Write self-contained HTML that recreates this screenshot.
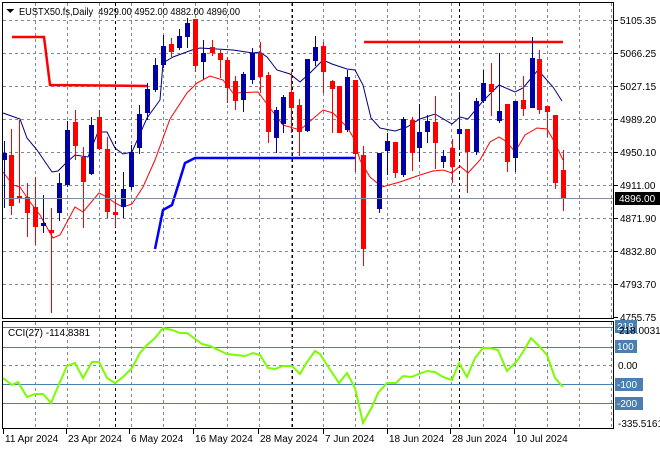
<!DOCTYPE html>
<html><head><meta charset="utf-8"><style>
html,body{margin:0;padding:0;background:#fff;width:660px;height:450px;overflow:hidden}
svg text{font-family:"Liberation Sans",sans-serif;font-size:10px;fill:#000}
</style></head><body>
<svg id="s" width="660" height="450" xmlns="http://www.w3.org/2000/svg" shape-rendering="crispEdges">
<rect width="660" height="450" fill="#fff"/>
<g id="grid" stroke="#7f8a99" stroke-dasharray="3,3" stroke-width="1"></g>
<g id="ind"></g>
<g id="cand"></g>
<line x1="2" y1="198.5" x2="614" y2="198.5" stroke="#8090a0"/>
<rect x="2.5" y="2.5" width="611" height="316" fill="none" stroke="#000"/>
<rect x="2.5" y="321.5" width="611" height="107" fill="none" stroke="#000"/>
<path d="M6 9 L14 9 L10 13 Z" fill="#000"/>
<text x="19" y="15" xml:space="preserve" textLength="221" lengthAdjust="spacingAndGlyphs">EUSTX50.fs,Daily  4929.00 4952.00 4882.00 4896.00</text>
<text x="8" y="336">CCI(27) -114.8381</text>
<g id="lab"></g>
</svg>
<script>
const NS="http://www.w3.org/2000/svg";
function el(p,t,a,txt){const e=document.createElementNS(NS,t);for(const k in a)e.setAttribute(k,a[k]);if(txt)e.textContent=txt;document.getElementById(p).appendChild(e);return e;}
[20,53,86,119,152,185,218,251,284].forEach(y=>el('grid','line',{x1:3,x2:613,y1:y+.5,y2:y+.5}));
[365].forEach(y=>el('grid','line',{x1:3,x2:613,y1:y+.5,y2:y+.5}));
for(let x=35;x<614;x+=32){if(x==115)continue;el('grid','line',{x1:x+.5,x2:x+.5,y1:3,y2:318});el('grid','line',{x1:x+.5,x2:x+.5,y1:322,y2:428});}
[115,292,459].forEach(x=>{el('grid','line',{x1:x+.5,x2:x+.5,y1:3,y2:318,stroke:'#000'});el('grid','line',{x1:x+.5,x2:x+.5,y1:322,y2:428,stroke:'#000'});});
[327,347,384,403].forEach(y=>el('ind','line',{x1:3,x2:613,y1:y+.5,y2:y+.5,stroke:'#4a7fb0'}));
function pl(pts,c,w){el('ind','polyline',{points:pts,fill:'none',stroke:c,'stroke-width':w,'shape-rendering':'auto'});}
pl("12,37 44,37 50,85 147,86",'#f00',2.5);
pl("364,42 563,42",'#f00',2.5);
pl("155,249 163,210 172,205 185,163 195,158 356,158",'#0000ff',2.5);
pl("3,113 20,119 27,138 37,150 52,172 58,171 67,162 75,155 88,157 98,132 107,132 115,148 123,154 132,152 147,118 160,100 163,63 173,57 192,50 200,48 233,50 253,53 260,52 267,57 277,70 290,74 300,82 310,73 323,60 332,64 347,69 355,70 363,85 371,118 380,128 395,131 407,127 420,119 435,114 452,124 460,117 468,119 483,101 499,85 515,92 523,88 538,70 553,87 562,101",'#000080',1);
pl("3,172 13,185 20,187 30,202 40,215 50,233 53,238 60,235 75,207 83,212 99,193 107,197 115,203 123,207 132,204 143,187 155,160 170,119 187,93 197,83 210,76 223,80 233,93 258,92 270,108 283,125 300,130 315,117 323,110 333,113 347,127 353,137 360,160 370,177 382,187 400,182 420,175 433,171 443,170 452,173 460,166 468,173 480,160 490,142 499,137 507,142 515,152 525,135 537,128 547,129 555,143 563,160",'#f00',1);
pl("3,378 12,385 18,382 27,397 35,394 43,394 51,403 60,382 67,366 75,363 83,378 92,362 99,362 107,378 115,383 123,377 132,368 140,353 147,345 155,338 163,328 172,330 180,333 187,333 202,344 210,346 227,354 245,356 253,353 260,355 268,368 275,369 283,366 292,366 300,374 307,362 315,351 320,354 327,365 339,383 347,373 355,388 363,423 372,407 378,393 387,383 396,383 403,376 411,377 427,371 435,372 443,377 452,380 459,363 467,377 475,358 483,348 490,348 498,350 507,371 517,361 523,352 531,338 538,345 547,355 555,378 563,387",'#7cfc00',2);
const C=[[4,'b',153,160,141,208],[11,'r',155,206,129,215],[19,'r',196,199,120,203],[27,'r',197,213,183,237],[35,'r',207,227,177,245],[43,'b',223,226,195,233],[51,'r',230,233,208,313],[59,'b',183,213,173,221],[67,'b',130,185,121,187],[75,'r',122,146,110,160],[83,'r',157,182,147,228],[91,'b',125,174,117,175],[99,'r',117,149,110,150],[107,'r',149,212,137,218],[115,'r',212,215,195,227],[123,'b',189,207,172,218],[131,'b',152,187,145,190],[139,'b',114,148,105,154],[147,'b',89,113,83,120],[155,'b',65,90,58,92],[163,'b',46,65,35,68],[171,'r',44,52,38,57],[179,'b',36,48,29,50],[187,'b',23,37,18,48],[195,'r',19,66,19,72],[203,'b',53,62,40,79],[212,'r',47,53,40,56],[220,'r',53,60,50,78],[227,'r',60,88,57,103],[235,'r',81,101,76,110],[243,'b',74,100,72,112],[252,'b',53,80,48,84],[260,'r',53,77,42,93],[268,'r',75,132,72,143],[276,'b',110,138,107,153],[283,'b',97,124,95,133],[291,'r',92,108,72,133],[299,'r',105,132,99,156],[307,'b',59,131,59,132],[315,'b',47,61,36,66],[323,'r',46,72,42,93],[332,'r',81,89,80,133],[339,'r',86,133,86,133],[347,'b',77,130,70,132],[355,'r',80,154,80,172],[363,'r',155,249,146,266],[379,'b',153,209,153,213],[387,'b',141,151,133,175],[395,'r',142,173,142,178],[403,'b',119,175,117,177],[412,'r',120,153,117,171],[419,'b',132,148,104,162],[427,'b',121,132,115,143],[435,'r',122,143,96,169],[443,'b',156,162,150,168],[452,'r',148,167,139,183],[459,'b',129,134,92,148],[467,'r',129,152,129,193],[476,'b',101,152,98,155],[483,'b',83,101,70,103],[491,'r',84,92,63,116],[499,'b',111,121,53,123],[507,'r',104,162,104,172],[515,'b',101,158,101,172],[523,'r',100,109,76,116],[532,'b',58,108,37,108],[539,'r',59,110,50,114],[547,'r',106,112,106,137],[555,'r',115,183,115,189],[563,'r',170,198,150,211]];
C.forEach(c=>{const col=c[1]=='b'?'#0000a8':'#f00';el('cand','rect',{x:c[0],y:c[4],width:1,height:c[5]-c[4],fill:col});el('cand','rect',{x:c[0]-2,y:c[2],width:5,height:Math.max(2,c[3]-c[2]),fill:col});});
[['5105.35',20],['5066.25',53],['5027.15',86],['4989.20',119],['4950.10',152],['4911.00',185],['4871.90',218],['4832.80',251],['4793.70',284],['4755.75',317]].forEach(p=>{el('lab','line',{x1:614,x2:618,y1:p[1]+.5,y2:p[1]+.5,stroke:'#000'});el('lab','text',{x:620,y:p[1]+4},p[0]);});
el('lab','rect',{x:615,y:192,width:45,height:13,fill:'#000'});
el('lab','text',{x:619,y:202,style:'fill:#fff'},'4896.00');
[['218',326],['100',346],['-100',384],['-200',403]].forEach(p=>{el('lab','rect',{x:615,y:p[1]-6,width:p[0].length*6+4,height:13,fill:'#4a7fb0'});el('lab','text',{x:617,y:p[1]+4,style:'fill:#fff'},p[0]);});
el('lab','text',{x:619,y:334},'218.0031');
el('lab','text',{x:618,y:369},'0.00');
el('lab','text',{x:618,y:427},'-335.5161');
[['11 Apr 2024',3],['23 Apr 2024',66],['6 May 2024',129],['16 May 2024',193],['28 May 2024',258],['7 Jun 2024',323],['18 Jun 2024',387],['28 Jun 2024',450],['10 Jul 2024',514]].forEach(d=>{el('lab','line',{x1:d[1]+.5,x2:d[1]+.5,y1:429,y2:434,stroke:'#000'});el('lab','text',{x:d[1]+2,y:442},d[0]);});
</script>
</body></html>
